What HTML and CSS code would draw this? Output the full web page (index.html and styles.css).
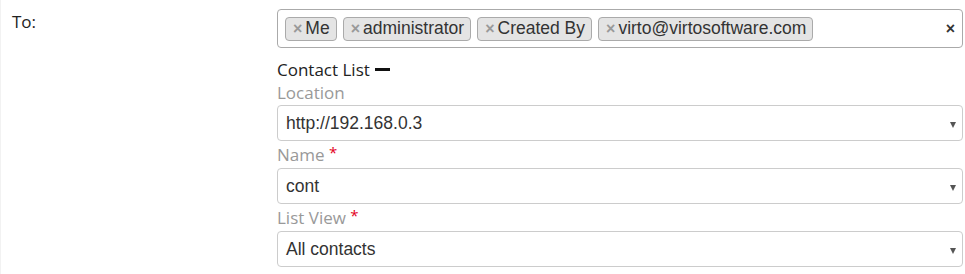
FILE: index.html
```html
<!DOCTYPE html>
<html>
<head>
<meta charset="utf-8">
<link rel="stylesheet" href="styles.css">
</head>
<body>
<div class="page">
  <div class="label">To:</div>
  <div class="field">
    <div class="multi">
      <span class="tag"><span class="x">×</span>Me</span>
      <span class="tag"><span class="x">×</span>administrator</span>
      <span class="tag"><span class="x">×</span>Created By</span>
      <span class="tag"><span class="x">×</span>virto@virtosoftware.com</span>
      <span class="clear">×</span>
    </div>
    <div class="section">Contact List <span class="dash"></span></div>
    <div class="flabel first">Location</div>
    <div class="select"><span class="value">http://192.168.0.3</span><span class="arrow"></span></div>
    <div class="flabel">Name <span class="req">*</span></div>
    <div class="select"><span class="value">cont</span><span class="arrow"></span></div>
    <div class="flabel">List View <span class="req">*</span></div>
    <div class="select"><span class="value">All contacts</span><span class="arrow"></span></div>
  </div>
</div>
</body>
</html>
```

FILE: styles.css
```css
html, body {
  margin: 0;
  background: #fff;
}
body {
  font-family: "Open Sans", "Noto Sans", sans-serif;
}
.page {
  display: flex;
  height: 274px;
  box-sizing: border-box;
  border-left: 1px solid #f2f2f2;
}
.label {
  width: 276px;
  box-sizing: border-box;
  padding-left: 11px;
  padding-top: 10px;
  font-size: 17px;
  line-height: 24px;
  color: #222;
}
.field {
  width: 686px;
  padding-top: 9px;
}
.multi {
  height: 39px;
  box-sizing: border-box;
  border: 1px solid #aaa;
  border-radius: 4px;
  display: flex;
  align-items: center;
  gap: 6px;
  padding: 0 7px;
}
.tag {
  height: 24px;
  box-sizing: border-box;
  border: 1px solid #aaa;
  border-radius: 4px;
  background: #e4e4e4;
  padding: 0 6px 0 7px;
  display: flex;
  align-items: center;
  font-family: "Liberation Sans", Arial, sans-serif;
  font-size: 17.5px;
  color: #333;
}
.tag .x {
  color: #999;
  font-weight: bold;
  font-size: 16px;
  margin-right: 3px;
}
.clear {
  margin-left: auto;
  font-family: "Liberation Sans", Arial, sans-serif;
  font-weight: bold;
  font-size: 16px;
  color: #333;
}
.section {
  margin-top: 10px;
  height: 23px;
  line-height: 23px;
  font-size: 17px;
  color: #222;
  display: flex;
  align-items: center;
  gap: 5px;
}
.dash {
  display: inline-block;
  width: 15px;
  height: 3px;
  background: #111;
  margin-top: -1px;
}
.flabel {
  height: 23px;
  line-height: 23px;
  font-size: 17px;
  color: #999;
  margin-top: 2px;
  margin-bottom: 2px;
}
.flabel.first {
  margin-top: 0;
  margin-bottom: 1px;
}
.req {
  color: #e3001b;
  font-size: 15px;
  line-height: 0;
  vertical-align: 3px;
}
.select {
  height: 36px;
  box-sizing: border-box;
  border: 1px solid #ccc;
  border-radius: 4px;
  display: flex;
  align-items: center;
  padding: 0 6px 0 8px;
  font-family: "Liberation Sans", Arial, sans-serif;
  font-size: 17.5px;
  color: #333;
}
.value {
  flex: 1;
}
.arrow {
  width: 0;
  height: 0;
  border-left: 3.5px solid transparent;
  border-right: 3.5px solid transparent;
  border-top: 6px solid #555;
  margin-top: 3px;
}
```
